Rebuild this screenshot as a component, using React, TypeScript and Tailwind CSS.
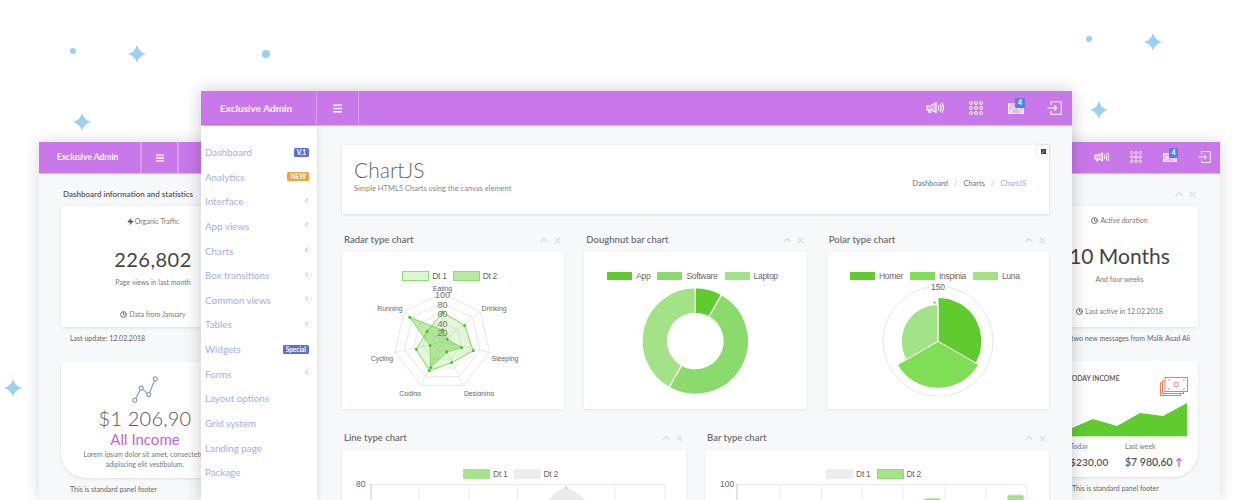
import { ChevronLeft, ChevronUp, X, Zap, Clock } from "lucide-react";
import type { ReactNode } from "react";

const NAV: { label: string; badge?: string; badgeClass?: string; arrow?: boolean }[] = [
  { label: "Dashboard", badge: "V.1", badgeClass: "bg-[#5b71d1] px-[3px]" },
  { label: "Analytics", badge: "NEW", badgeClass: "bg-[#f0a33c] px-[3px]" },
  { label: "Interface", arrow: true },
  { label: "App views", arrow: true },
  { label: "Charts", arrow: true },
  { label: "Box transitions", arrow: true },
  { label: "Common views", arrow: true },
  { label: "Tables", arrow: true },
  { label: "Widgets", badge: "Special", badgeClass: "bg-[#5b71d1] px-[3px]" },
  { label: "Forms", arrow: true },
  { label: "Layout options" },
  { label: "Grid system" },
  { label: "Landing page" },
  { label: "Package" },
];

function Sparkle({ className }: { className: string }) {
  return (
    <svg className={`absolute h-[18px] w-[18px] ${className}`} viewBox="-9 -9 18 18">
      <path d="M0-9Q1.8-1.8 9 0 1.8 1.8 0 9-1.8 1.8-9 0-1.8-1.8 0-9Z" fill="#9bd0f1" />
    </svg>
  );
}

function Hamburger({ w }: { w: number }) {
  return (
    <svg width={w} height={w} viewBox="0 0 8 8" stroke="#fff" strokeWidth="1.3">
      <path d="M0 1.2h8M0 4h8M0 6.8h8" />
    </svg>
  );
}

function TopIcons({ small }: { small?: boolean }) {
  const s = small ? 0.86 : 1;
  const badge = small ? "h-[10px] w-[9px] text-[6.5px]" : "h-[10px] w-[10px] text-[7px]";
  return (
    <div className={small ? "ml-auto flex items-center gap-[21px] pr-[9px]" : "ml-auto flex items-center gap-[25px] pr-[10px]"}>
      {/* megaphone */}
      <svg width={18 * s} height={12 * s} viewBox="0 0 18 12" fill="none" stroke="#fff" strokeWidth="1.1">
        <path d="M1 3.5h4.5L10 .8v9.6L5.5 8H4.2L4.6 10.5H3L2.6 8H1z" fill="#ffffff66" />
        <path d="M12 3.2q1.3 2.6 0 5M14 1.8q2.2 4 0 8M16 .8q2.8 5 0 10" />
      </svg>
      {/* grid of rings */}
      <svg width={14 * s} height={14 * s} viewBox="0 0 14 14" fill="none" stroke="#fff" strokeWidth="1">
        {[2, 7, 12].flatMap((y) =>
          [2, 7, 12].map((x) => <circle key={`${x}-${y}`} cx={x} cy={y} r="1.5" />),
        )}
      </svg>
      {/* envelope + badge */}
      <div className="relative">
        <svg className="block" width={16 * s} height={11 * s} viewBox="0 0 16 11" fill="none" stroke="#fff" strokeWidth="1.1">
          <rect x=".6" y=".6" width="14.8" height="9.8" fill="#ffffff77" />
          <path d="M.6.6l5 5 2.4-2 2.4 2 5-5M.6 10.4l5-5M15.4 10.4l-5-5" />
        </svg>
        <span className={`absolute -top-[5px] -right-[1px] flex items-center justify-center rounded-[1px] bg-[#5b7fd8] font-bold text-white ${badge}`}>4</span>
      </div>
      {/* sign in */}
      <svg className={small ? "" : "-ml-[2px]"} width={15 * s} height={14 * s} viewBox="0 0 15 14" fill="none" stroke="#fff" strokeWidth="1.1">
        <path d="M4 4V.7h10.3v12.6H4V10" />
        <path d="M.5 7h9M7 4.2 9.8 7 7 9.8" />
      </svg>
    </div>
  );
}

function PanelControls() {
  return (
    <div className="flex items-center gap-[3px] text-[#dfe2e5]">
      <ChevronUp size={12} strokeWidth={3.5} />
      <X size={9} strokeWidth={4} />
    </div>
  );
}

function Legend({ items }: { items: { label: string; box: string }[] }) {
  return (
    <div className="flex h-[12px] items-center justify-center gap-[6px] pr-[7px]">
      {items.map((item) => (
        <div className="flex items-center gap-[3px]" key={item.label}>
          <span className={`h-[10px] w-[27px] border ${item.box}`} />
          <span className="[font-family:'Liberation_Sans',sans-serif] text-[8.5px] tracking-[-0.3px] text-[#666]">{item.label}</span>
        </div>
      ))}
    </div>
  );
}

function ChartPanel({ title, legend, children, className = "" }: { title: string; legend: ReactNode; children: ReactNode; className?: string }) {
  return (
    <div className={className}>
      <div className="flex h-[24px] items-center justify-between pt-[2px] pr-[2px] pl-[2px]">
        <span className="text-[9.5px] font-semibold text-[#6c6f72]">{title}</span>
        <PanelControls />
      </div>
      <div className="mt-[1px] h-[157px] rounded-[1px] bg-white pt-[18px] shadow-[0_1px_3px_rgba(0,0,0,0.09)]">
        {legend}
        {children}
      </div>
    </div>
  );
}

function Radar() {
  const cx = 442.3;
  const cy = 341.7;
  const R = 48.5;
  const vertex = (i: number, r: number) => {
    const a = (i * 2 * Math.PI) / 7;
    return `${cx + r * Math.sin(a)},${cy - r * Math.cos(a)}`;
  };
  const dt1 = [[442.7, 312.3], [464.7, 325.7], [473.3, 350.7], [451.7, 362.7], [429.3, 370.7], [416.3, 349.3], [427, 331.7]];
  const dt2 = [[442.7, 330], [447.3, 339.3], [461.7, 347.7], [446.7, 352], [430.7, 367.7], [430, 345.7], [409.7, 317.3]];
  const labels = [["Running", 390, 311], ["Drinking", 494, 311], ["Cycling", 382, 361], ["Sleeping", 505, 361], ["Coding", 410, 396], ["Designing", 479, 396], ["Eating", 442.5, 291]];
  const ticks = [["100", 298], ["80", 308], ["60", 317], ["40", 327], ["20", 336]];
  return (
    <svg className="block" width="222" height="114" viewBox="342 282 222 114" fontFamily="'Liberation Sans',sans-serif">
      {[0.2, 0.4, 0.6, 0.8, 1].map((k) => (
        <polygon key={k} fill="none" stroke="#e4e4e4" strokeWidth="0.9" points={[0, 1, 2, 3, 4, 5, 6].map((i) => vertex(i, R * k)).join(" ")} />
      ))}
      {[0, 1, 2, 3, 4, 5, 6].map((i) => (
        <line key={i} x1={cx} y1={cy} x2={vertex(i, R).split(",")[0]} y2={vertex(i, R).split(",")[1]} stroke="#e4e4e4" strokeWidth="0.9" />
      ))}
      <polygon points={dt1.map((p) => p.join(",")).join(" ")} fill="#62cb31" fillOpacity="0.18" stroke="#86dd62" strokeWidth="1" />
      <polygon points={dt2.map((p) => p.join(",")).join(" ")} fill="#62cb31" fillOpacity="0.38" stroke="#86dd62" strokeWidth="1" />
      {[...dt1, ...dt2].map((p, i) => (
        <circle key={i} cx={p[0]} cy={p[1]} r="1.4" fill="#3fc40e" />
      ))}
      {ticks.map(([t, y]) => (
        <text key={t} x="442.5" y={y} textAnchor="middle" fontSize="9" fill="#777">{t}</text>
      ))}
      {labels.map(([t, x, y]) => (
        <text key={t} x={x} y={y} textAnchor="middle" fontSize="6.8" fill="#666">{t}</text>
      ))}
    </svg>
  );
}

function arc(cx: number, cy: number, r: number, r0: number, a0: number, a1: number) {
  const p = (rad: number, deg: number) => {
    const a = (deg * Math.PI) / 180;
    return `${(cx + rad * Math.sin(a)).toFixed(2)} ${(cy - rad * Math.cos(a)).toFixed(2)}`;
  };
  const large = a1 - a0 > 180 ? 1 : 0;
  if (r0 === 0) return `M${cx} ${cy}L${p(r, a0)}A${r} ${r} 0 ${large} 1 ${p(r, a1)}Z`;
  return `M${p(r0, a0)}L${p(r, a0)}A${r} ${r} 0 ${large} 1 ${p(r, a1)}L${p(r0, a1)}A${r0} ${r0} 0 ${large} 0 ${p(r0, a0)}Z`;
}

function Doughnut() {
  return (
    <svg className="block" width="222" height="114" viewBox="584 282 222 114">
      <path d={arc(695.3, 341, 53.3, 27.7, 0, 29.5)} fill="#60cb2f" stroke="#fff" strokeWidth="1.2" />
      <path d={arc(695.3, 341, 53.3, 27.7, 29.5, 209.5)} fill="#8bdb6c" stroke="#fff" strokeWidth="1.2" />
      <path d={arc(695.3, 341, 53.3, 27.7, 209.5, 360)} fill="#a3e286" stroke="#fff" strokeWidth="1.2" />
    </svg>
  );
}

function Polar() {
  return (
    <svg className="block" width="223" height="114" viewBox="827 282 223 114" fontFamily="'Liberation Sans',sans-serif">
      <circle cx="938" cy="341.3" r="55" fill="none" stroke="#e6e6e6" strokeWidth="1" />
      <rect x="930" y="282" width="16" height="9" fill="#fff" />
      <text x="938" y="289.5" textAnchor="middle" fontSize="8.5" fill="#666">150</text>
      <text x="934.5" y="304" textAnchor="middle" fontSize="6" fill="#666">+</text>
      <path d={arc(938, 341.3, 44, 0, 0, 120)} fill="#60cb2f" stroke="#fff" strokeWidth="1" />
      <path d={arc(938, 341.3, 47, 0, 120, 240)} fill="#7fdd56" stroke="#fff" strokeWidth="1" />
      <path d={arc(938, 341.3, 36.7, 0, 240, 360)} fill="#a3e286" stroke="#fff" strokeWidth="1" />
    </svg>
  );
}

function LineChart() {
  const xs = [371, 419, 469, 517.5, 566, 615, 665];
  return (
    <svg className="block" width="344" height="24" viewBox="342 480 344 24" fontFamily="'Liberation Sans',sans-serif">
      <text x="356" y="487" fontSize="8.5" fill="#666">80</text>
      <line x1="368" y1="484.5" x2="665" y2="484.5" stroke="#ebebeb" />
      {xs.map((x, i) => (
        <line key={x} x1={x} y1="484" x2={x} y2="504" stroke={i === 0 ? "#c9c9c9" : "#ebebeb"} />
      ))}
      <path d="M549 500Q558 488 566 488 574 488 589 504H545Z" fill="#ebebeb" />
      <circle cx="566" cy="488" r="1.2" fill="#ccc" />
    </svg>
  );
}

function BarChart() {
  const xs = [737, 780, 821.5, 862, 903, 945, 986, 1027];
  return (
    <svg className="block" width="344" height="24" viewBox="705 480 344 24" fontFamily="'Liberation Sans',sans-serif">
      <text x="720" y="487" fontSize="8.5" fill="#666">100</text>
      <line x1="735" y1="484.5" x2="1027" y2="484.5" stroke="#ebebeb" />
      {xs.map((x, i) => (
        <line key={x} x1={x} y1="484" x2={x} y2="504" stroke={i === 0 ? "#c9c9c9" : "#ebebeb"} />
      ))}
      <rect x="925" y="499" width="15" height="6" fill="#a5e48c" stroke="#8edb6f" />
      <rect x="1008" y="494" width="15" height="11" fill="#ececec" />
      <rect x="1008" y="496" width="15" height="9" fill="#a5e48c" stroke="#8edb6f" />
    </svg>
  );
}

function AreaSketch() {
  return (
    <svg className="block" width="157" height="34" viewBox="1041 403 157 34">
      <path d="M1041 434L1072 428 1093 419 1117 426 1140 413 1163 416 1187 403V436H1041Z" fill="#60cb2f" />
      <path d="M1041 436.5H1187" stroke="#c6eeb4" />
    </svg>
  );
}

function BackWindow() {
  return (
    <div className="absolute top-[142px] left-[39px] h-[358px] w-[1181px] overflow-hidden bg-[#f7f8fa] shadow-[0_0_14px_rgba(0,0,0,0.16)]">
      <div className="flex h-[32px] items-stretch border-b border-b-[#dcb2ee] bg-[#c878e8] text-white">
        <div className="flex w-[103px] items-center border-r-2 border-r-[#d59cec] pl-[18px] text-[8.5px] font-bold">Exclusive Admin</div>
        <div className="flex w-[37px] items-center justify-center border-r-2 border-r-[#d59cec]">
          <Hamburger w={8} />
        </div>
        <TopIcons small />
      </div>
      <div className="flex justify-between px-[22px]">
        <div className="w-[184px]">
          <div className="mt-[14px] mb-[6px] flex h-[12px] items-center pl-[2px] text-[8px] font-semibold whitespace-nowrap text-[#555]">Dashboard information and statistics</div>
          <div className="flex h-[121px] flex-col items-center bg-white pt-[10px] text-[7px] text-[#777] shadow-[0_1px_3px_rgba(0,0,0,0.1)]">
            <div className="flex items-center gap-[1px]">
              <Zap size={7} fill="#555" stroke="#555" /> Organic Traffic
            </div>
            <div className="mt-[17px] text-[20px] leading-[30px] tracking-[0.5px] text-[#444]">226,802</div>
            <div className="mt-[3px]">Page views in last month</div>
            <div className="mt-[22px] flex items-center gap-[2px]">
              <Clock size={7} stroke="#555" strokeWidth={3} /> Data from January
            </div>
          </div>
          <div className="mt-[6px] mb-[19px] pl-[9px] text-[7px] leading-[10px] text-[#666]">Last update: 12.02.2018</div>
          <div className="h-[116px] w-[168px] rounded-bl-[25px] bg-white pt-[13px] text-center shadow-[0_1px_3px_rgba(0,0,0,0.1)]">
            <svg className="mx-auto block" width="28" height="30" viewBox="130 374 30 30" fill="#fff" stroke="#5b71d1" strokeWidth="1">
              <path d="M134 400l7-13 8 7 7-17" fill="none" />
              <circle cx="134" cy="400" r="2.2" />
              <circle cx="141" cy="387" r="2.2" />
              <circle cx="149" cy="394" r="2.2" />
              <circle cx="156" cy="377" r="2.2" />
            </svg>
            <div className="text-[20px] leading-[26px] font-light tracking-[0.2px] text-[#555]">$1 206,90</div>
            <div className="text-[15px] leading-[17px] text-[#c264e4]">All Income</div>
            <div className="mt-[1px] text-[7px] leading-[10px] whitespace-nowrap text-[#777]">
              Lorem ipsum dolor sit amet, consectetur
              <br />
              adipiscing elit vestibulum.
            </div>
          </div>
          <div className="mt-[6px] pl-[9px] text-[7px] leading-[10px] text-[#666]">This is standard panel footer</div>
        </div>

        <div className="w-[157px]">
          <div className="mt-[14px] mb-[6px] flex h-[12px] items-center justify-end pr-[1px]">
            <PanelControls />
          </div>
          <div className="flex h-[121px] flex-col items-center bg-white pt-[9px] text-[7px] text-[#777] shadow-[0_1px_3px_rgba(0,0,0,0.1)]">
            <div className="flex items-center gap-[2px]">
              <Clock size={7} stroke="#555" strokeWidth={3} /> Active duration
            </div>
            <div className="mt-[15px] text-[21px] leading-[30px] whitespace-nowrap text-[#444]">10 Months</div>
            <div className="mt-[3px]">And four weeks</div>
            <div className="mt-[22px] flex items-center gap-[2px]">
              <Clock size={7} stroke="#555" strokeWidth={3} /> Last active in 12.02.2018
            </div>
          </div>
          <div className="mt-[6px] mb-[18px] pr-[8px] text-right text-[7px] leading-[10px] whitespace-nowrap text-[#666]">You have two new messages from Malik Asad Ali</div>
          <div className="h-[116px] rounded-br-[25px] bg-white shadow-[0_1px_3px_rgba(0,0,0,0.1)]">
            <div className="flex h-[42px] items-start justify-between pr-[10px]">
              <span className="pt-[12px] pl-[27px] text-[6.8px] font-semibold whitespace-nowrap text-[#555]">TODAY INCOME</span>
              <svg className="mt-[16px]" width="28" height="19" viewBox="0 0 28 19" fill="#fff" stroke="#f4785a" strokeWidth="1">
                <rect x=".5" y="6" width="20" height="12.5" />
                <rect x="2.5" y="4" width="21" height="12.5" />
                <rect x="5" y=".5" width="22.5" height="14" />
                <circle cx="16.2" cy="7.5" r="2.2" fill="none" />
                <path d="M8 3h2M23 3h2M8 12h2M23 12h2" />
              </svg>
            </div>
            <AreaSketch />
            <div className="flex pt-[4px] pl-[29px] text-[7px] text-[#777]">
              <div className="w-[55px]">
                <div className="leading-[10px]">Today</div>
                <div className="mt-[5px] text-[10px] leading-[12px] font-semibold tracking-[0.2px] text-[#555]">$230,00</div>
              </div>
              <div>
                <div className="leading-[10px]">Last week</div>
                <div className="mt-[5px] text-[10.5px] leading-[12px] font-semibold whitespace-nowrap text-[#555]">
                  $7 980,60 <span className="font-bold text-[#c264e4]">↑</span>
                </div>
              </div>
            </div>
          </div>
          <div className="mt-[6px] pl-[31px] text-[7px] leading-[10px] whitespace-nowrap text-[#666]">This is standard panel footer</div>
        </div>
      </div>
    </div>
  );
}

function MainWindow() {
  return (
    <div className="absolute top-[91px] left-[201px] h-[409px] w-[871px] overflow-hidden bg-[#f7f8fa] shadow-[0_0_16px_rgba(0,0,0,0.22)]">
      <div className="flex h-[35px] items-stretch border-b border-b-[#dcb2ee] bg-[#c878e8] text-white">
        <div className="flex w-[116px] items-center border-r-[1.5px] border-r-[#d59cec] pl-[19px] text-[10px] font-bold">Exclusive Admin</div>
        <div className="flex w-[42px] items-center justify-center border-r border-r-[#d59cec]">
          <Hamburger w={9} />
        </div>
        <TopIcons />
      </div>
      <div className="flex h-[374px]">
        <nav className="z-10 w-[116px] shrink-0 bg-white pt-[14px] pr-[8px] pl-[4px] shadow-[1px_0_5px_rgba(0,0,0,0.1)]">
          {NAV.map((item) => (
            <div className="flex h-[24.65px] items-center justify-between text-[9.8px] text-[#a2aeec]" key={item.label}>
              <span>{item.label}</span>
              {item.badge ? (
                <span className={`rounded-[1.5px] text-[6.5px] leading-[9px] font-bold text-white ${item.badgeClass}`}>{item.badge}</span>
              ) : null}
              {item.arrow ? <ChevronLeft size={7} strokeWidth={3} className="mb-[3px] -mr-[1px] text-[#8a9be6]" /> : null}
            </div>
          ))}
        </nav>
        <main className="flex-1 pt-[19px] pr-[23px] pl-[25px]">
          <div className="relative flex h-[69px] items-start justify-between bg-white pt-[12px] pr-[23px] pl-[12px] shadow-[0_1px_3px_rgba(0,0,0,0.12)]">
            <div>
              <h1 className="text-[21px] leading-[25px] font-light text-[#606468]">ChartJS</h1>
              <p className="mt-[2px] text-[7.5px] leading-[10px] text-[#888]">Simple HTML5 Charts using the canvas element</p>
            </div>
            <div className="mt-[22px] flex gap-[6px] text-[7.5px] leading-[10px] text-[#6b7080]">
              <span>Dashboard</span>
              <span className="text-[#a2aeec]">/</span>
              <span>Charts</span>
              <span className="text-[#a2aeec]">/</span>
              <span className="text-[#9aa6f0]">ChartJS</span>
            </div>
            <div className="absolute top-0 right-0 flex h-[12px] w-[12px] items-center justify-center bg-white shadow-[0_0_2px_rgba(0,0,0,0.2)]">
              <svg width="5" height="5" viewBox="0 0 5 5">
                <rect width="5" height="5" fill="#444" />
                <path d="M1 4l2.4-2.4" stroke="#fff" strokeWidth="0.7" />
              </svg>
            </div>
          </div>

          <div className="mt-[13px] grid grid-cols-3 gap-[20px]">
            <ChartPanel
              title="Radar type chart"
              legend={
                <Legend
                  items={[
                    { label: "Dt 1", box: "border-[#8ddc6e] bg-[#dff5d3]" },
                    { label: "Dt 2", box: "border-[#8ddc6e] bg-[#b6eaa0]" },
                  ]}
                />
              }
            >
              <Radar />
            </ChartPanel>
            <ChartPanel
              title="Doughnut bar chart"
              legend={
                <Legend
                  items={[
                    { label: "App", box: "border-white bg-[#60cb2f]" },
                    { label: "Software", box: "border-white bg-[#8bdb6c]" },
                    { label: "Laptop", box: "border-white bg-[#a3e286]" },
                  ]}
                />
              }
            >
              <Doughnut />
            </ChartPanel>
            <ChartPanel
              title="Polar type chart"
              legend={
                <Legend
                  items={[
                    { label: "Homer", box: "border-white bg-[#60cb2f]" },
                    { label: "Inspinia", box: "border-white bg-[#7fdd56]" },
                    { label: "Luna", box: "border-white bg-[#a3e286]" },
                  ]}
                />
              }
            >
              <Polar />
            </ChartPanel>
          </div>

          <div className="mt-[16px] grid grid-cols-2 gap-[19px]">
            <ChartPanel
              title="Line type chart"
              legend={
                <Legend
                  items={[
                    { label: "Dt 1", box: "border-[#a5e48c] bg-[#a5e48c]" },
                    { label: "Dt 2", box: "border-[#ededed] bg-[#ededed]" },
                  ]}
                />
              }
            >
              <LineChart />
            </ChartPanel>
            <ChartPanel
              title="Bar type chart"
              legend={
                <Legend
                  items={[
                    { label: "Dt 1", box: "border-[#ededed] bg-[#ededed]" },
                    { label: "Dt 2", box: "border-[#8edb6f] bg-[#a5e48c]" },
                  ]}
                />
              }
            >
              <BarChart />
            </ChartPanel>
          </div>
        </main>
      </div>
    </div>
  );
}

export default function App() {
  return (
    <div className="relative h-[500px] w-[1250px] overflow-hidden bg-white [font-family:Lato,sans-serif]">
      <Sparkle className="top-[45px] left-[128px]" />
      <Sparkle className="top-[113px] left-[73px]" />
      <Sparkle className="top-[379px] left-[4px]" />
      <Sparkle className="top-[33px] left-[1144px]" />
      <Sparkle className="top-[101px] left-[1090px]" />
      <span className="absolute top-[48px] left-[70px] h-[6px] w-[6px] rounded-full bg-[#9bd0f1]" />
      <span className="absolute top-[50px] left-[262px] h-[8px] w-[8px] rounded-full bg-[#9bd0f1]" />
      <span className="absolute top-[36px] left-[1086px] h-[6px] w-[6px] rounded-full bg-[#9bd0f1]" />
      <BackWindow />
      <MainWindow />
    </div>
  );
}
